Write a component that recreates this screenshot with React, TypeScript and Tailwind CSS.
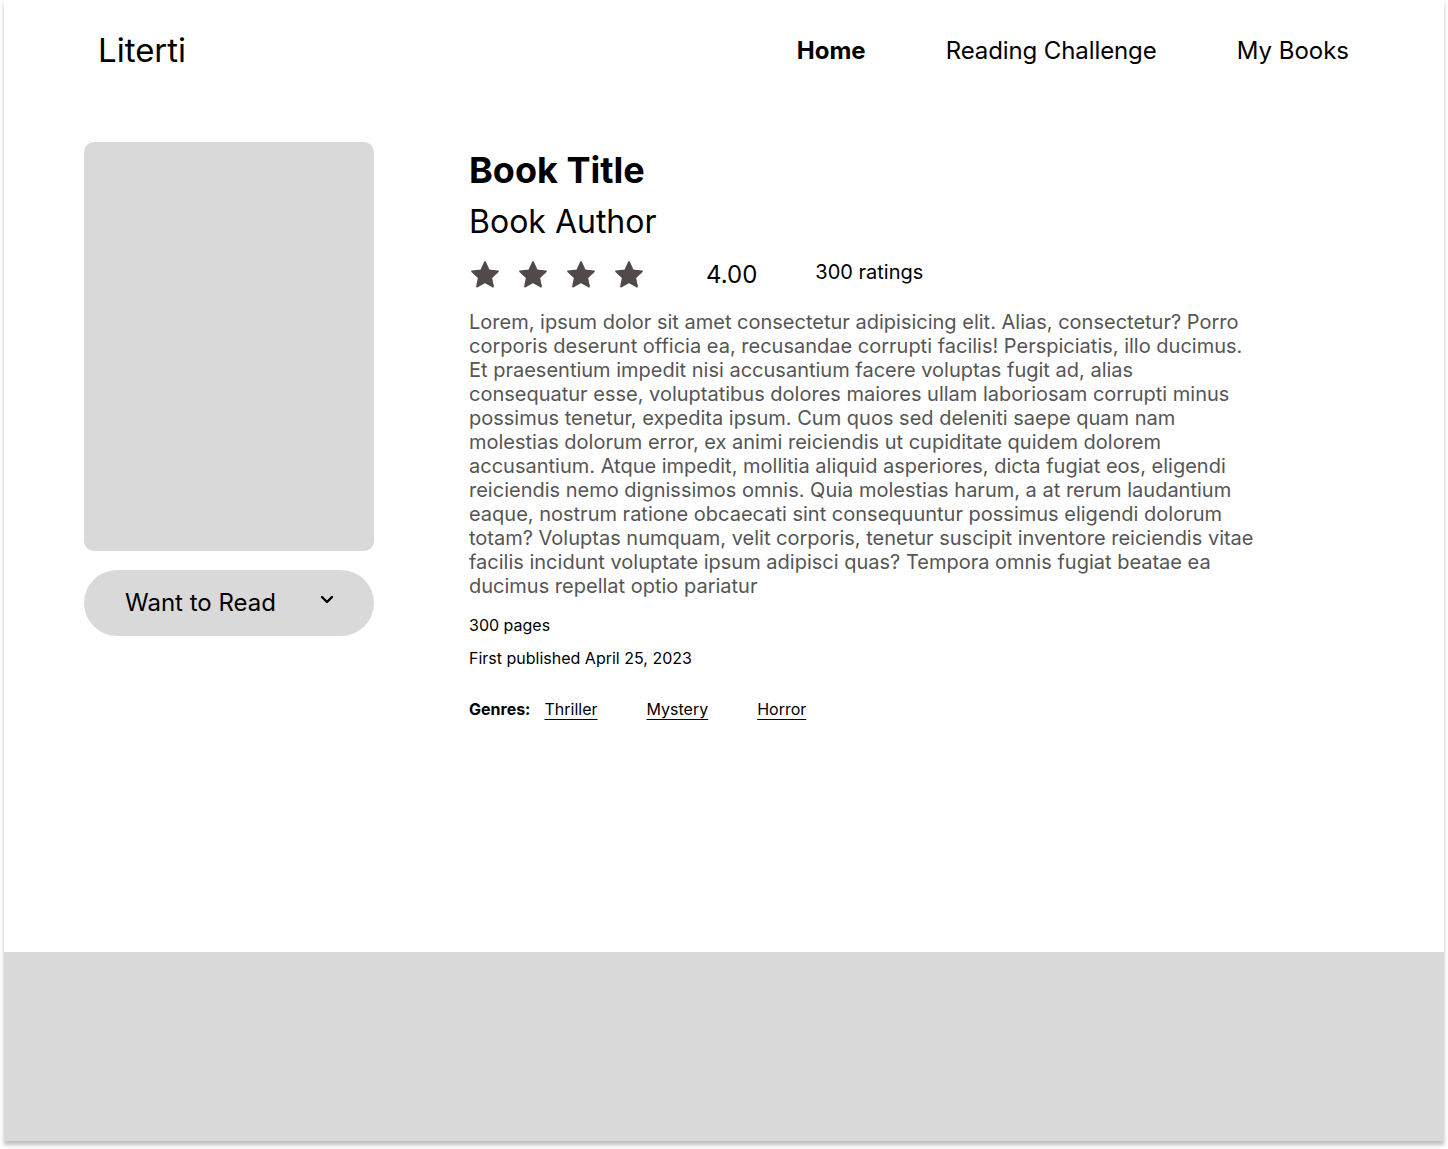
import React from "react";

const Star = () => (
  <svg width="32" height="32" viewBox="0 0 24 24" className="shrink-0">
    <path
      fill="#524a4a"
      stroke="#524a4a"
      strokeWidth="1.2"
      strokeLinejoin="round"
      d="M12 2.2l2.95 6.3 6.85.8-5.07 4.7 1.35 6.8L12 17.4l-6.08 3.4 1.35-6.8L2.2 9.3l6.85-.8z"
    />
  </svg>
);

const description =
  "Lorem, ipsum dolor sit amet consectetur adipisicing elit. Alias, consectetur? Porro corporis deserunt officia ea, recusandae corrupti facilis! Perspiciatis, illo ducimus. Et praesentium impedit nisi accusantium facere voluptas fugit ad, alias consequatur esse, voluptatibus dolores maiores ullam laboriosam corrupti minus possimus tenetur, expedita ipsum. Cum quos sed deleniti saepe quam nam molestias dolorum error, ex animi reiciendis ut cupiditate quidem dolorem accusantium. Atque impedit, mollitia aliquid asperiores, dicta fugiat eos, eligendi reiciendis nemo dignissimos omnis. Quia molestias harum, a at rerum laudantium eaque, nostrum ratione obcaecati sint consequuntur possimus eligendi dolorum totam? Voluptas numquam, velit corporis, tenetur suscipit inventore reiciendis vitae facilis incidunt voluptate ipsum adipisci quas? Tempora omnis fugiat beatae ea ducimus repellat optio pariatur";

export default function App() {
  return (
    <div className="min-h-[1149px] bg-white font-['Inter',sans-serif] text-black">
      <div className="ml-[4px] flex h-[1141px] w-[1440px] flex-col bg-white shadow-[0_4px_4px_rgba(0,0,0,0.25)]">
        {/* Header */}
        <header className="flex h-[100px] items-start justify-between pl-[94px] pr-[95px] pt-[30px]">
          <a href="#" className="text-[33px] leading-[40px]">
            Literti
          </a>
          <nav className="flex items-center gap-[80px] pt-[2px] text-[24px] leading-[38px]">
            <a href="#" className="font-bold">
              Home
            </a>
            <a href="#" className="tracking-[-0.1px]">Reading Challenge</a>
            <a href="#">My Books</a>
          </nav>
        </header>

        {/* Book details */}
        <main className="flex flex-1 gap-[95px] pl-[80px] pt-[42px]">
          <div className="flex w-[290px] flex-col gap-[19px]">
            <div className="h-[409px] rounded-[10px] bg-[#d9d9d9]" />
            <button className="flex h-[66px] items-center justify-between rounded-full bg-[#d9d9d9] pl-[41px] pr-[40px] text-[24px]">
              <span>Want to Read</span>
              <svg width="14" height="10" viewBox="0 0 14 10" className="mb-[6px]">
                <path d="M2 2l5 5 5-5" fill="none" stroke="#000" strokeWidth="2.4" strokeLinecap="round" strokeLinejoin="round" />
              </svg>
            </button>
          </div>

          <div className="flex w-[786px] flex-col">
            <h1 className="mt-[6px] text-[36px] font-bold leading-[44px]">Book Title</h1>
            <h2 className="mt-[10px] text-[32px] leading-[40px]">Book Author</h2>
            <div className="mt-[15px] flex items-center">
              <div className="flex gap-[16px]">
                <Star />
                <Star />
                <Star />
                <Star />
              </div>
              <span className="ml-[61px] text-[24px]">4.00</span>
              <span className="mb-[6px] ml-[58px] text-[20px]">300 ratings</span>
            </div>
            <p className="mt-[17px] text-[20px] leading-[24px] text-[#555555]">{description}</p>
            <p className="mt-[15px] text-[16px] leading-[24px]">300 pages</p>
            <p className="mt-[9px] text-[16px] leading-[24px]">First published April 25, 2023</p>
            <div className="mt-[27px] flex items-center text-[16px]">
              <span className="font-bold">Genres:</span>
              <a href="#" className="ml-[14px] underline underline-offset-[4px]">Thriller</a>
              <a href="#" className="ml-[49px] underline underline-offset-[4px]">Mystery</a>
              <a href="#" className="ml-[49px] underline underline-offset-[4px]">Horror</a>
            </div>
          </div>
        </main>

        {/* Footer */}
        <footer className="h-[189px] bg-[#d9d9d9]" />
      </div>
    </div>
  );
}
